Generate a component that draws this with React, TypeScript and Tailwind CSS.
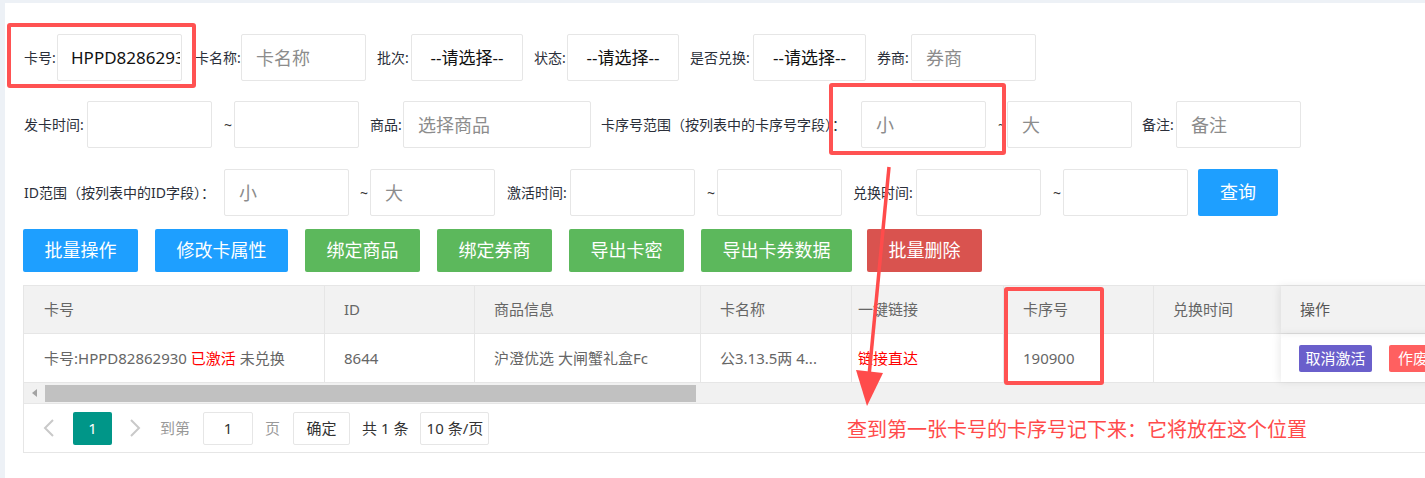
import React from "react";

const inputCls =
  "h-[47px] border border-[#e6e6e6] rounded-[2px] bg-white pl-[14px] pr-[2px] text-[18px] text-[#222] placeholder:text-[#8c8c8c] outline-none";

const Label = ({ children, className }: { children: React.ReactNode; className: string }) => (
  <span className={"shrink-0 whitespace-nowrap text-[14px] leading-[20px] text-[#2b2f3a] " + className}>{children}</span>
);

const Tilde = ({ className }: { className: string }) => (
  <span className={"shrink-0 text-[14px] leading-[20px] text-[#333] " + className}>~</span>
);

const Select = ({ className }: { className: string }) => (
  <div
    className={
      "h-[47px] shrink-0 border border-[#e6e6e6] rounded-[2px] flex items-center justify-center text-[17px] text-[#111] " +
      className
    }
  >
    --请选择--
  </div>
);

const Btn = ({ children, className }: { children: React.ReactNode; className: string }) => (
  <button className={"h-[43px] shrink-0 rounded-[2px] text-white text-[18px] flex items-center justify-center " + className}>
    {children}
  </button>
);

const App = () => {
  return (
    <div className="relative w-[1425px] h-[478px] overflow-hidden bg-[#edf1f6] font-['Noto_Sans','Noto_Sans_CJK_SC',sans-serif]">
      <div className="ml-[5px] mt-[3px] h-[475px] w-[1520px] bg-white pl-[18px] pt-[31px]">
        {/* row 1 */}
        <div className="flex items-center h-[47px] pl-[1px]">
          <Label className="w-[33px]">卡号:</Label>
          <input
            className="h-[47px] w-[125px] shrink-0 border border-[#e6e6e6] rounded-[2px] bg-white pl-[13px] pr-[1px] text-[17px] text-[#111] outline-none"
            value="HPPD82862930"
            readOnly
          />
          <Label className="w-[46px] ml-[13px]">卡名称:</Label>
          <input className={inputCls + " w-[125px] shrink-0"} placeholder="卡名称" />
          <Label className="w-[34px] ml-[11px]">批次:</Label>
          <Select className="w-[112px]" />
          <Label className="w-[33px] ml-[11px]">状态:</Label>
          <Select className="w-[112px]" />
          <Label className="w-[63px] ml-[11px]">是否兑换:</Label>
          <Select className="w-[113px]" />
          <Label className="w-[34px] ml-[11px]">券商:</Label>
          <input className={inputCls + " w-[125px] shrink-0"} placeholder="券商" />
        </div>

        {/* row 2 */}
        <div className="flex items-center h-[47px] mt-[20px] pl-[1px]">
          <Label className="w-[63px]">发卡时间:</Label>
          <input className={inputCls + " w-[125px] shrink-0"} />
          <Tilde className="w-[22px] pl-[12px]" />
          <input className={inputCls + " w-[125px] shrink-0"} />
          <Label className="w-[33px] ml-[11px]">商品:</Label>
          <input className={inputCls + " w-[188px] shrink-0"} placeholder="选择商品" />
          <Label className="w-[260px] ml-[10px]">卡序号范围（按列表中的卡序号字段）：</Label>
          <input className={inputCls + " w-[125px] shrink-0"} placeholder="小" />
          <Tilde className="w-[21px] pl-[12px]" />
          <input className={inputCls + " w-[125px] shrink-0"} placeholder="大" />
          <Label className="w-[34px] ml-[10px]">备注:</Label>
          <input className={inputCls + " w-[125px] shrink-0"} placeholder="备注" />
        </div>

        {/* row 3 */}
        <div className="flex items-center h-[47px] mt-[21px] pl-[1px]">
          <Label className="w-[200px]">ID范围（按列表中的ID字段）：</Label>
          <input className={inputCls + " w-[125px] shrink-0"} placeholder="小" />
          <Tilde className="w-[21px] pl-[11px]" />
          <input className={inputCls + " w-[125px] shrink-0"} placeholder="大" />
          <Label className="w-[63px] ml-[12px]">激活时间:</Label>
          <input className={inputCls + " w-[125px] shrink-0"} />
          <Tilde className="w-[22px] pl-[12px]" />
          <input className={inputCls + " w-[125px] shrink-0"} />
          <Label className="w-[63px] ml-[11px]">兑换时间:</Label>
          <input className={inputCls + " w-[125px] shrink-0"} />
          <Tilde className="w-[22px] pl-[12px]" />
          <input className={inputCls + " w-[125px] shrink-0"} />
          <button className="ml-[10px] h-[47px] w-[80px] shrink-0 rounded-[2px] bg-[#1e9fff] text-white text-[18px]">查询</button>
        </div>

        {/* action buttons */}
        <div className="flex items-center mt-[13px]">
          <Btn className="w-[115px] bg-[#1e9fff]">批量操作</Btn>
          <Btn className="w-[133px] ml-[17px] bg-[#1e9fff]">修改卡属性</Btn>
          <Btn className="w-[115px] ml-[17px] bg-[#5cb85c]">绑定商品</Btn>
          <Btn className="w-[115px] ml-[17px] bg-[#5cb85c]">绑定券商</Btn>
          <Btn className="w-[115px] ml-[17px] bg-[#5cb85c]">导出卡密</Btn>
          <Btn className="w-[151px] ml-[17px] bg-[#5cb85c]">导出卡券数据</Btn>
          <Btn className="w-[115px] ml-[15px] bg-[#d9534f]">批量删除</Btn>
        </div>

        {/* table */}
        <div className="mt-[13px] w-[1480px] border border-[#e6e6e6] text-[15px] text-[#666]">
          <div className="flex h-[48px] bg-[#f2f2f2] border-b border-[#e6e6e6]">
            <div className="w-[301px] shrink-0 border-r border-[#e6e6e6] pl-[20px] flex items-center">卡号</div>
            <div className="w-[150px] shrink-0 border-r border-[#e6e6e6] pl-[19px] flex items-center">ID</div>
            <div className="w-[226px] shrink-0 border-r border-[#e6e6e6] pl-[19px] flex items-center">商品信息</div>
            <div className="w-[151px] shrink-0 border-r border-[#e6e6e6] pl-[19px] flex items-center">卡名称</div>
            <div className="w-[152px] shrink-0 border-r border-[#e6e6e6] pl-[6px] flex items-center">一键链接</div>
            <div className="w-[150px] shrink-0 border-r border-[#e6e6e6] pl-[19px] flex items-center">卡序号</div>
            <div className="w-[127px] shrink-0 pl-[19px] flex items-center">兑换时间</div>
            <div className="w-[200px] shrink-0 pl-[19px] flex items-center shadow-[-2px_0_8px_rgba(0,0,0,0.08)] text-[#555]">操作</div>
          </div>
          <div className="flex h-[48px]">
            <div className="w-[301px] shrink-0 border-r border-[#e6e6e6] pl-[20px] flex items-center whitespace-nowrap">
              卡号:HPPD82862930&nbsp;<span className="text-[#ff0000]">已激活</span>&nbsp;未兑换
            </div>
            <div className="w-[150px] shrink-0 border-r border-[#e6e6e6] pl-[19px] flex items-center">8644</div>
            <div className="w-[226px] shrink-0 border-r border-[#e6e6e6] pl-[19px] flex items-center whitespace-nowrap">沪澄优选 大闸蟹礼盒Fc</div>
            <div className="w-[151px] shrink-0 border-r border-[#e6e6e6] pl-[19px] flex items-center whitespace-nowrap">公3.13.5两 4...</div>
            <div className="w-[152px] shrink-0 border-r border-[#e6e6e6] pl-[6px] flex items-center text-[#ff0000]">链接直达</div>
            <div className="w-[150px] shrink-0 border-r border-[#e6e6e6] pl-[19px] flex items-center">190900</div>
            <div className="w-[127px] shrink-0"></div>
            <div className="w-[200px] shrink-0 pl-[18px] flex items-center gap-[17px] shadow-[-2px_0_8px_rgba(0,0,0,0.08)]">
              <span className="h-[27px] w-[73px] rounded-[2px] bg-[#6a5fcb] text-white text-[15px] flex items-center justify-center">取消激活</span>
              <span className="h-[27px] w-[48px] rounded-[2px] bg-[#ff6060] text-white text-[15px] flex items-center justify-center">作废</span>
            </div>
          </div>
          <div className="flex items-center h-[21px] bg-[#f1f1f1] border-t border-[#e6e6e6]">
            <div className="w-[21px] shrink-0 flex items-center justify-center">
              <span className="w-0 h-0 border-y-[4px] border-y-transparent border-r-[5px] border-r-[#a3a3a3]"></span>
            </div>
            <div className="w-[651px] h-[17px] bg-[#c1c1c1]"></div>
          </div>
          <div className="flex items-center h-[49px] border-t border-[#e6e6e6] pl-[19px] text-[15px]">
            <svg width="12" height="18" viewBox="0 0 12 18" className="shrink-0">
              <path d="M10 1 L2 9 L10 17" stroke="#c9c9c9" strokeWidth="2" fill="none" />
            </svg>
            <span className="ml-[18px] w-[39px] h-[33px] rounded-[2px] bg-[#009688] text-white flex items-center justify-center">1</span>
            <svg width="12" height="18" viewBox="0 0 12 18" className="ml-[17px] shrink-0">
              <path d="M2 1 L10 9 L2 17" stroke="#c9c9c9" strokeWidth="2" fill="none" />
            </svg>
            <span className="ml-[19px] text-[#999]">到第</span>
            <span className="ml-[13px] w-[50px] h-[33px] border border-[#e6e6e6] rounded-[2px] flex items-center justify-center text-[#333]">1</span>
            <span className="ml-[12px] text-[#999]">页</span>
            <span className="ml-[13px] w-[57px] h-[33px] border border-[#e6e6e6] rounded-[2px] flex items-center justify-center text-[#333]">确定</span>
            <span className="ml-[12px] text-[#333]">共 1 条</span>
            <span className="ml-[12px] w-[69px] h-[33px] border border-[#e6e6e6] rounded-[2px] flex items-center justify-center text-[#333] whitespace-nowrap">10 条/页</span>
          </div>
        </div>
      </div>

      {/* annotations */}
      <div className="absolute left-[7px] top-[23px] w-[189px] h-[65px] border-4 border-[#ff5252] rounded-[3px]"></div>
      <div className="absolute left-[829px] top-[83px] w-[177px] h-[72px] border-4 border-[#ff5252] rounded-[3px]"></div>
      <div className="absolute left-[1004px] top-[287px] w-[100px] h-[98px] border-4 border-[#ff5252] rounded-[3px]"></div>
      <svg className="absolute left-0 top-0 pointer-events-none" width="1425" height="478">
        <line x1="889" y1="167" x2="869" y2="376" stroke="#ff4b4b" strokeWidth="3.5" />
        <polygon points="856,370 883,373 867,406" fill="#ff4b4b" />
      </svg>
      <div className="absolute left-[847px] top-[416px] text-[20px] leading-[28px] text-[#ff4b4b] whitespace-nowrap">
        查到第一张卡号的卡序号记下来：它将放在这个位置
      </div>
    </div>
  );
};

export default App;
